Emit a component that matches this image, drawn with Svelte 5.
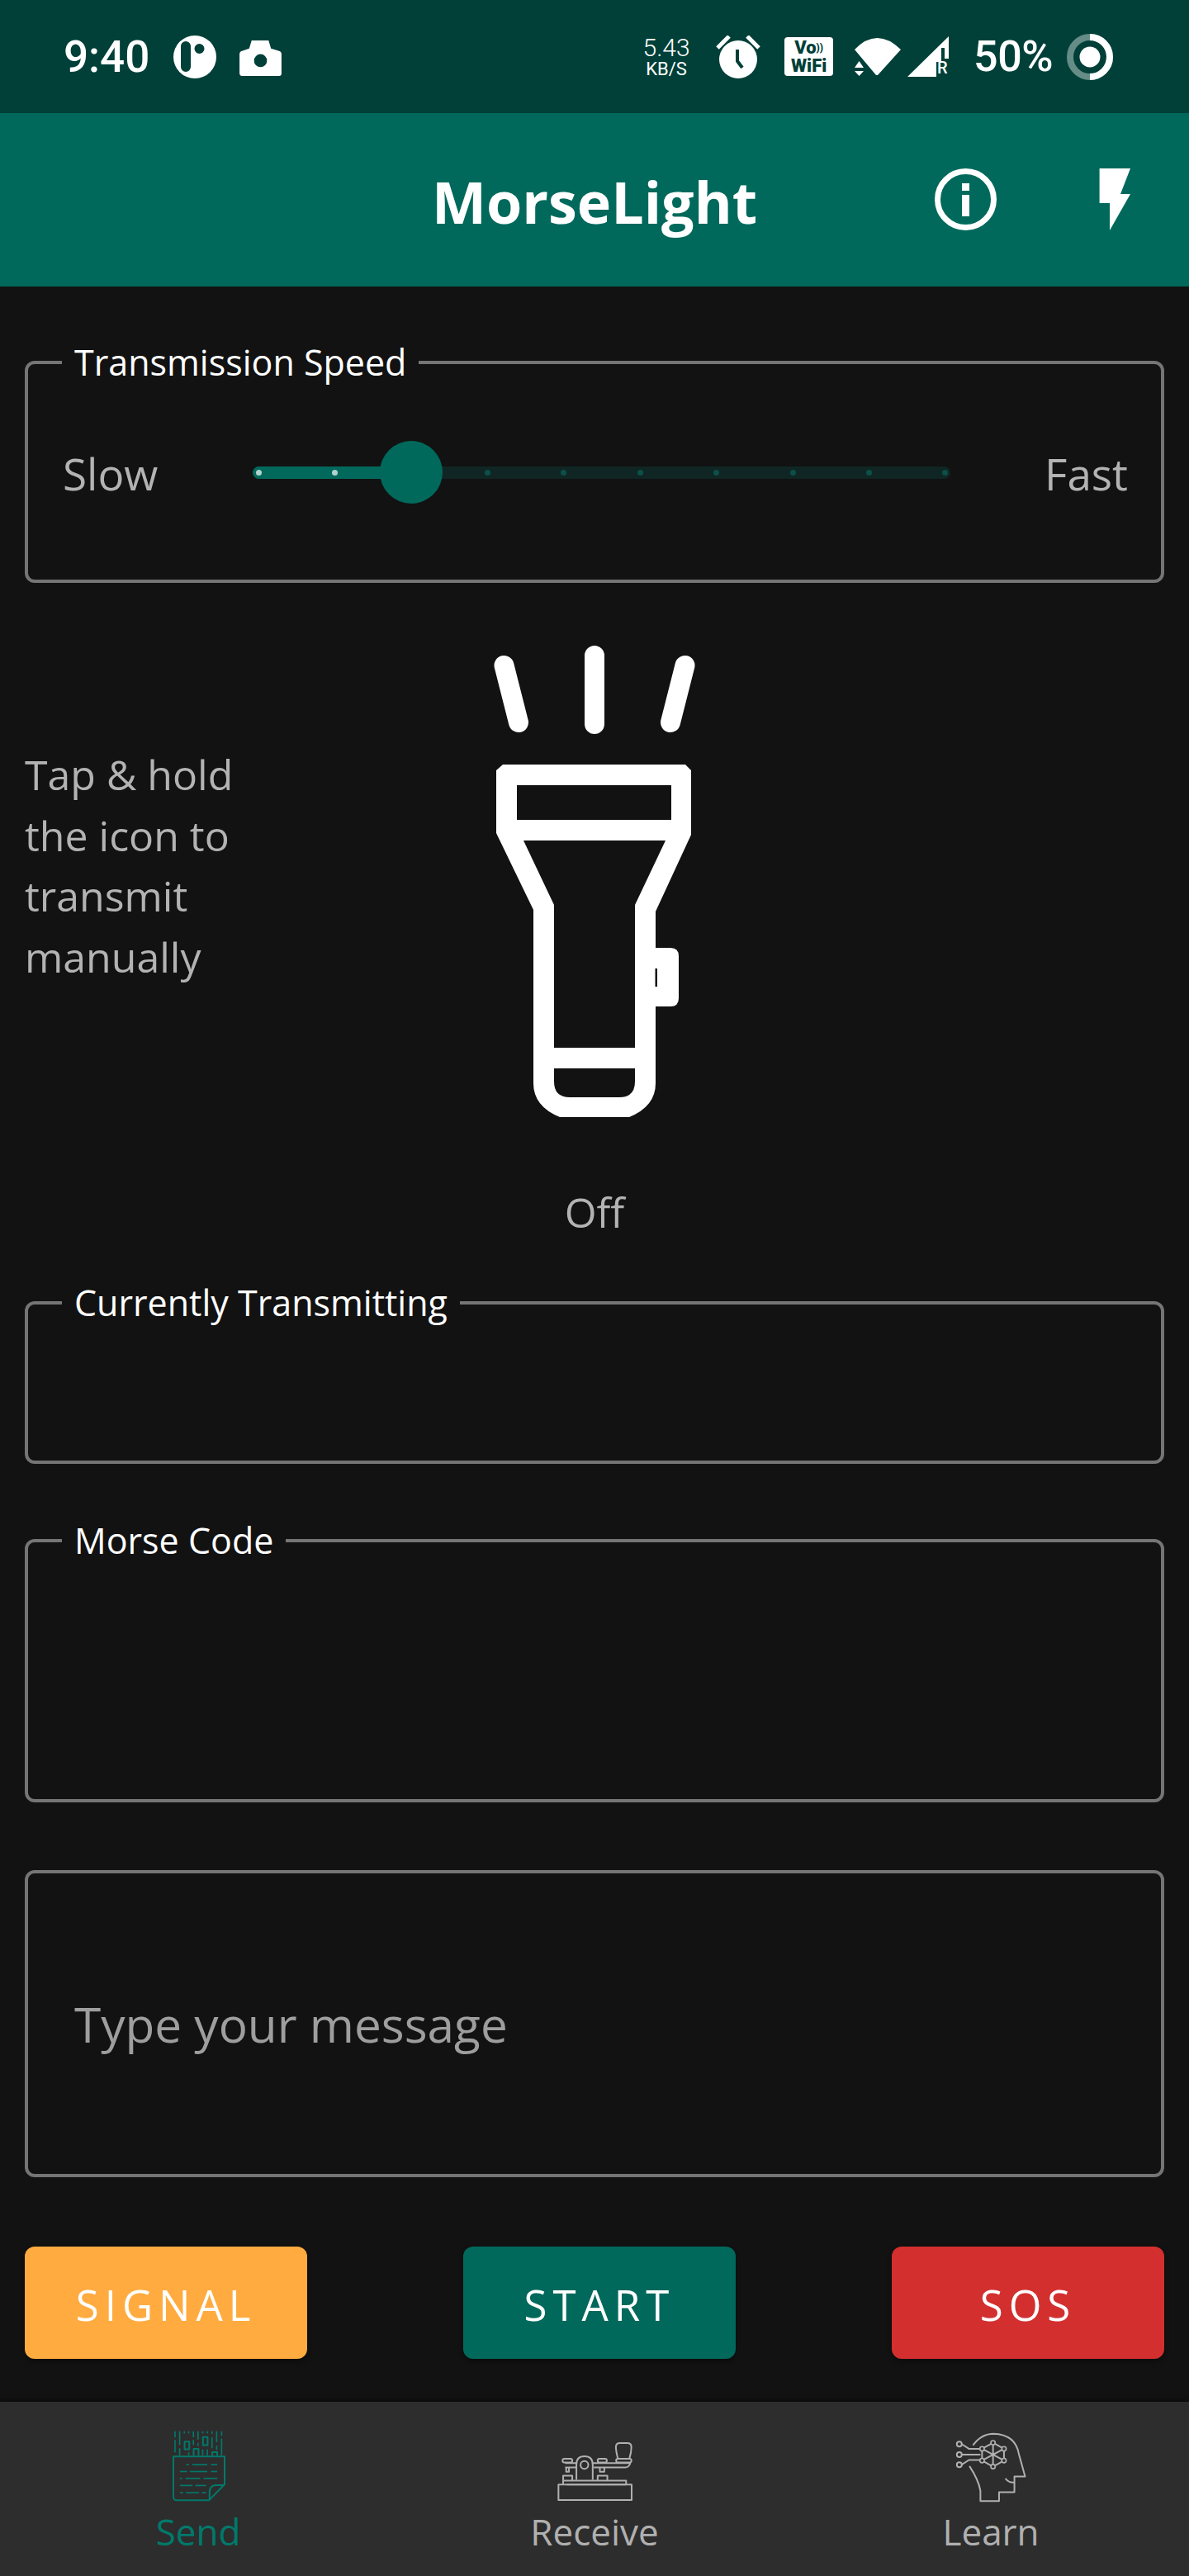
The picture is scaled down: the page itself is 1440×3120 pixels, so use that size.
<script>
	const ticks = Array.from({ length: 10 }, (_, i) => i);
	const speed = 2;
	const step = 92.44;

	// morse-ish dash rows on the Send icon: [y, x1, x2]
	const paperLines = [
		[250, 675, 685], [250, 697, 752], [250, 765, 788],
		[275, 652, 678], [275, 688, 752], [275, 765, 788],
		[300, 652, 660], [300, 672, 726], [300, 738, 788],
		[326, 652, 698], [326, 708, 748],
		[352, 652, 664], [352, 674, 722], [352, 732, 748]
	];
	// falling code columns: [x, y1, y2]
	const codeBits = [
		[634, 128, 150], [634, 160, 205], [651, 128, 178], [651, 190, 216],
		[668, 128, 136], [684, 128, 136], [684, 205, 216],
		[701, 128, 150], [701, 160, 178], [718, 128, 158], [718, 170, 182],
		[735, 128, 136], [735, 195, 216], [752, 128, 136], [752, 194, 216],
		[769, 128, 138], [769, 150, 190], [786, 128, 168], [786, 180, 196],
		[804, 128, 145], [804, 155, 216]
	];
	const hexNodes = [
		[368, 165], [408, 187], [408, 230], [368, 252], [328, 230], [328, 187]
	];
</script>

<div class="phone">
	<header class="status">
		<div class="status-left">
			<span class="time">9:40</span>
			<svg class="ic-p" viewBox="0 0 52 52" width="52" height="52">
				<path fill="#fff" fill-rule="evenodd" d="M26 0a26 26 0 1 0 0 52a26 26 0 1 0 0-52zM15 7a6 6 0 0 1 6 6v25a6 6 0 0 1-12 0v-25a6 6 0 0 1 6-6zM31.500 10a6 6 0 1 0 0 12a6 6 0 1 0 0-12z" />
			</svg>
			<svg class="ic-cam" viewBox="0 0 52 44" width="51" height="43">
				<path fill="#fff" fill-rule="evenodd" d="M15 0h21l3 10l10 3q3 1 3 4v24q0 3-3 3h-46q-3 0-3-4v-23q0-3 3-4l9-3zM26 17a8 8 0 1 0 0 16a8 8 0 1 0 0-16z" />
			</svg>
		</div>
		<div class="status-right">
			<div class="netspeed">
				<span class="net-num">5.43</span>
				<span class="net-unit">KB/S</span>
			</div>
			<svg class="ic-alarm" viewBox="0 0 54 52" width="54" height="52">
				<path stroke="#fff" stroke-width="5" d="M16 1L2 15M38 1l14 14" />
				<circle cx="27" cy="29" r="23" fill="#fff" />
				<path stroke="#004038" stroke-width="4" fill="none" d="M26 17v14l6 8" />
			</svg>
			<div class="vowifi">
				<span>Vo<small>))</small></span>
				<span>WiFi</span>
			</div>
			<svg class="ic-wifi" viewBox="0 0 58 46" width="58" height="46">
				<path fill="#fff" d="M1 14Q28 -14 57 14L29 45H27Z" />
				<path fill="#fff" d="M1 36l5.500-8l5.500 8zM1 40l5.500 6l5.500-6z" />
			</svg>
			<svg class="ic-signal" viewBox="0 0 50 49" width="50" height="49">
				<path fill="#fff" d="M50 0V27H45V14L41 14V31H35V49H0z" />
			</svg>
			<span class="signal-r">R</span>
			<span class="battery">50%</span>
			<svg class="ic-ring" viewBox="0 0 56 56" width="56" height="56">
				<circle cx="28" cy="28" r="24" fill="none" stroke="#fff" stroke-opacity="0.4" stroke-width="8" />
				<path d="M28 4a24 24 0 0 1 0 48" fill="none" stroke="#fff" stroke-width="8" />
				<circle cx="28" cy="28" r="12.500" fill="#fff" />
			</svg>
		</div>
	</header>

	<div class="appbar">
		<h1>MorseLight</h1>
		<svg class="ic-info" viewBox="0 0 75 75" width="75" height="75">
			<circle cx="37.500" cy="37.500" r="34" fill="none" stroke="#fff" stroke-width="7" />
			<path fill="#fff" d="M33 18h9v9h-9zM33 32h9v26h-9z" />
		</svg>
		<svg class="ic-bolt" viewBox="1330 204 38 75" width="38" height="75">
			<path fill="#fff" d="M1330.600 204H1368L1356 235H1368L1343 279V246H1330.600z" />
		</svg>
	</div>

	<main>
		<fieldset class="box speed">
			<legend>Transmission Speed</legend>
			<div class="slider-row">
				<span class="muted slow">Slow</span>
				<div class="track">
					<div class="fill" style="width: {7 + speed * step}px"></div>
					{#each ticks as t}
						<span class="tick" class:on={t <= speed} style="left: {7 + t * step}px"></span>
					{/each}
					<span class="thumb" style="left: {7 + speed * step}px"></span>
				</div>
				<span class="muted fast">Fast</span>
			</div>
		</fieldset>

		<section class="manual">
			<p class="hint muted">Tap &amp; hold the icon to transmit manually</p>
			<div class="torch">
				<svg viewBox="590 780 260 580" width="260" height="580">
					<g stroke="#fff" stroke-width="24" stroke-linecap="round">
						<path d="M610.500 806L628 875M720 794V877M829.500 806L812 875" />
					</g>
					<path fill="#fff" fill-rule="evenodd" d="M609 926H830L837 933V1011L794 1104V1148H812Q822 1148 822 1158V1209Q822 1219 812 1219H794V1312Q794 1340 762 1353H678Q646 1340 646 1312V1102L601 1009V933ZM626 951V993H813V951ZM634 1018L671 1096V1269H769V1096L806 1018ZM671 1294V1310Q671 1329 690 1329H750Q769 1329 769 1310V1294ZM793.500 1173V1195H796V1173Z" />
				</svg>
				<span class="muted off">Off</span>
			</div>
			<div></div>
		</section>

		<fieldset class="box current">
			<legend>Currently Transmitting</legend>
		</fieldset>

		<fieldset class="box morse">
			<legend>Morse Code</legend>
		</fieldset>

		<div class="message">
			<span>Type your message</span>
		</div>

		<div class="actions">
			<button class="signal">SIGNAL</button>
			<button class="start">START</button>
			<button class="sos">SOS</button>
		</div>
	</main>

	<nav>
		<div class="tab active">
			<svg viewBox="610 115 220 275" width="73" height="92">
				<g fill="none" stroke="currentColor" stroke-width="6" stroke-linejoin="round">
					<path d="M628 220H815V322L758 380H642Q628 380 628 366Z" />
					<path d="M815 325H785Q760 325 760 352V380" />
					<rect x="669" y="166" width="17" height="28" />
					<rect x="736" y="149" width="17" height="30" />
					<path d="M702 216V192H720V216M770 216V204H788V216" />
				</g>
				<g stroke="currentColor" stroke-width="5">
					{#each paperLines as [y, a, b]}
						<line x1={a} y1={y} x2={b} y2={y} />
					{/each}
					{#each codeBits as [x, a, b]}
						<line x1={x} y1={a} x2={x} y2={b} />
					{/each}
				</g>
			</svg>
			<span>Send</span>
		</div>
		<div class="tab">
			<svg viewBox="215 140 290 230" width="97" height="77">
				<g fill="none" stroke="currentColor" stroke-width="6" stroke-linejoin="round">
					<rect x="228" y="302" width="265" height="56" />
					<path d="M245 300V288H473V302M258 302H473" />
					<path d="M245 288V270H278V288M370 288V270H405V288" />
					<path d="M293 285V230Q293 200 322 200Q352 200 352 230V285" />
					<circle cx="322" cy="231" r="14" />
					<rect x="243" y="209" width="35" height="13" rx="6" />
					<rect x="370" y="209" width="33" height="13" rx="6" />
					<rect x="437" y="209" width="55" height="13" rx="6" />
					<path d="M252 224H293M252 240H293M256 240V256H266V240" />
					<path d="M352 224H490M356 240H470Q484 240 488 224M378 240V256H394V240" />
					<path d="M443 207Q436 180 436 166Q436 152 450 152H478Q492 152 492 166Q492 185 485 207" />
				</g>
			</svg>
			<span>Receive</span>
		</div>
		<div class="tab">
			<svg viewBox="228 124 264 262" width="88" height="87">
				<g fill="none" stroke="currentColor" stroke-width="6" stroke-linejoin="round">
					<path d="M295 174Q325 132 370 132Q450 135 462 205L485 288H446V345H390V378H322V340Q315 300 282 250" />
					<path d="M413 295Q425 312 446 310" />
					<circle cx="245" cy="170" r="9" />
					<circle cx="245" cy="208" r="9" />
					<circle cx="245" cy="245" r="9" />
					<path d="M254 170L280 187H322M254 208H322M254 245L280 228H322" />
					<path d="M368 165L408 187V230L368 252L328 230V187Z" />
					<path d="M368 165V252M328 187L408 230M408 187L328 230" />
				</g>
				{#each hexNodes as [x, y]}
					<circle cx={x} cy={y} r="8" fill="#2d2d2d" stroke="currentColor" stroke-width="5" />
				{/each}
				<circle cx="368" cy="208" r="6" fill="currentColor" />
			</svg>
			<span>Learn</span>
		</div>
	</nav>
</div>

<style>
	:global(body) {
		background: #121212;
	}

	.phone {
		width: 1440px;
		height: 3120px;
		display: flex;
		flex-direction: column;
		background: #121212;
		font-family: "Open Sans", "Noto Sans", sans-serif;
		overflow: hidden;
	}

	/* Status bar */
	.status {
		height: 137px;
		flex: none;
		background: #004038;
		display: flex;
		justify-content: space-between;
		align-items: center;
		color: #fff;
		font-family: Roboto, sans-serif;
		padding: 0 92px 0 77px;
	}

	.status-left,
	.status-right {
		display: flex;
		align-items: center;
	}

	.time {
		font-size: 53px;
		font-weight: 500;
		width: 101px;
		white-space: nowrap;
	}

	.ic-p {
		margin-left: 32px;
	}

	.ic-cam {
		margin-left: 28px;
		margin-top: 4px;
	}

	.netspeed {
		display: flex;
		flex-direction: column;
		align-items: center;
		width: 58px;
		margin-right: 31px;
	}

	.net-num {
		font-size: 30px;
		font-weight: 300;
		line-height: 30px;
	}

	.net-unit {
		font-size: 22px;
		line-height: 22px;
	}

	.vowifi {
		width: 59px;
		height: 47px;
		margin-left: 29px;
		background: #fff;
		border-radius: 4px;
		color: #004038;
		font-size: 22px;
		font-weight: 900;
		line-height: 22px;
		display: flex;
		flex-direction: column;
		align-items: center;
		justify-content: center;
	}

	.vowifi small {
		font-size: 12px;
		vertical-align: top;
	}

	.ic-wifi {
		margin-left: 25px;
	}

	.ic-signal {
		margin-left: 7px;
	}

	.signal-r {
		font-size: 20px;
		font-weight: 500;
		margin-left: -14px;
		margin-top: 26px;
		width: 14px;
	}

	.battery {
		font-size: 52px;
		font-weight: 500;
		margin-left: 30px;
		letter-spacing: -0.5px;
	}

	.ic-ring {
		margin-left: 17px;
	}

	/* App bar */
	.appbar {
		height: 210px;
		flex: none;
		box-sizing: border-box;
		padding-top: 4px;
		background: #00695c;
		position: relative;
		display: flex;
		align-items: center;
		justify-content: center;
	}

	.appbar h1 {
		margin: 0;
		color: #fff;
		font-size: 70px;
		font-weight: 700;
	}

	.ic-info {
		position: absolute;
		left: 1132px;
		top: 67px;
	}

	.ic-bolt {
		position: absolute;
		left: 1331px;
		top: 67px;
	}

	main {
		flex: 1;
		padding: 67px 30px 0;
		display: flex;
		flex-direction: column;
	}

	.muted {
		color: #b3b3b3;
		font-size: 50px;
	}

	/* Outlined boxes */
	.box {
		margin: 0;
		padding: 0;
		border: 4px solid #757575;
		border-radius: 12px;
		box-sizing: border-box;
		min-width: 0;
	}

	.box legend {
		margin-left: 41px;
		padding: 0 15px;
		color: #fff;
		font-size: 43px;
		line-height: 50px;
	}

	.speed {
		height: 292px;
	}

	.current {
		height: 220px;
		margin-top: 57px;
	}

	.morse {
		height: 342px;
		margin-top: 68px;
	}

	.slider-row {
		display: flex;
		align-items: center;
		height: 62px;
		margin-top: 77px;
		padding: 0 40px 0 42px;
	}

	.slow {
		flex: 0 0 230px;
		font-size: 53px;
		line-height: 62px;
		padding-top: 4px;
	}

	.fast {
		flex: 1;
		text-align: right;
		font-size: 53px;
		line-height: 62px;
		padding-top: 4px;
	}

	.track {
		position: relative;
		flex: 0 0 845px;
		height: 15px;
		border-radius: 8px;
		background: #102624;
	}

	.fill {
		position: absolute;
		left: 0;
		top: 0;
		height: 100%;
		border-radius: 8px 0 0 8px;
		background: #00695c;
	}

	.tick {
		position: absolute;
		top: 4px;
		width: 7px;
		height: 7px;
		margin-left: -3.5px;
		border-radius: 50%;
		background: #0b5048;
	}

	.tick.on {
		background: #b3d2ce;
	}

	.thumb {
		position: absolute;
		top: -31px;
		width: 76px;
		height: 76px;
		margin-left: -38px;
		border-radius: 50%;
		background: #00695c;
	}

	/* Flashlight */
	.manual {
		display: grid;
		grid-template-columns: 1fr auto 1fr;
		margin-top: 74px;
	}

	.hint {
		margin: 122px 0 0;
		width: 290px;
		line-height: 73.500px;
	}

	.torch {
		display: flex;
		flex-direction: column;
		align-items: center;
	}

	.torch svg {
		display: block;
	}

	.off {
		margin-top: 80px;
		line-height: 56px;
	}

	.message {
		height: 372px;
		margin-top: 82px;
		box-sizing: border-box;
		border: 4px solid #757575;
		border-radius: 12px;
		display: flex;
		align-items: center;
		padding-left: 56px;
		color: #9e9e9e;
		font-size: 58.500px;
		font-weight: 500;
	}

	.actions {
		display: flex;
		justify-content: space-between;
		margin-top: 84px;
	}

	.actions button {
		height: 136px;
		width: 330px;
		padding: 4px 0 0;
		border: none;
		border-radius: 12px;
		color: #fff;
		font-family: inherit;
		font-size: 51px;
		letter-spacing: 7px;
		box-shadow: 0 3px 6px rgba(0, 0, 0, 0.4);
	}

	.actions .signal {
		width: 342px;
		background: #ffab40;
	}

	.actions .start {
		background: #00695c;
	}

	.actions .sos {
		background: #d32f2f;
	}

	/* Bottom nav */
	nav {
		height: 211px;
		flex: none;
		background: #2d2d2d;
		box-shadow: 0 -2px 6px rgba(0, 0, 0, 0.5);
		display: grid;
		grid-template-columns: repeat(3, 1fr);
	}

	.tab {
		position: relative;
		display: flex;
		flex-direction: column;
		align-items: center;
		justify-content: flex-end;
		padding-bottom: 26px;
		color: #b0b0b0;
		font-size: 44px;
		line-height: 56px;
	}

	.tab svg {
		display: block;
		margin-bottom: 6px;
	}

	.tab.active {
		color: #00796b;
	}
</style>
